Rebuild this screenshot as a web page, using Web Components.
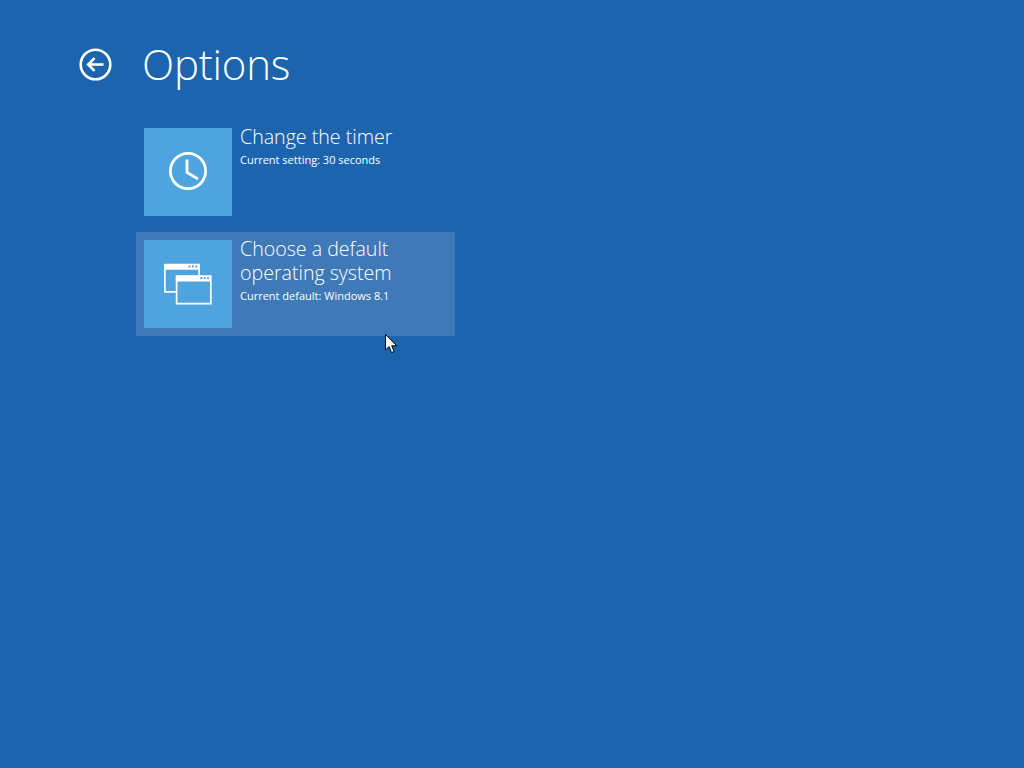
<!DOCTYPE html>
<html lang="en"><head><meta charset="utf-8"><title>Options</title>
<style>
html,body{margin:0;height:100%;background:#1c65ae;overflow:hidden}
body{font-family:"Open Sans","Liberation Sans",sans-serif;color:#fff}
</style></head>
<body>
<options-page>
  <page-header slot="header">Options</page-header>
  <option-tile icon="clock"><span slot="title">Change the timer</span><span slot="sub">Current setting: 30 seconds</span></option-tile>
  <option-tile icon="windows" hover><span slot="title" class="l">Choose a default</span><span slot="title" class="l">operating system</span><span slot="sub">Current default: Windows 8.1</span></option-tile>
</options-page>
<mouse-cursor></mouse-cursor>
<script>
class OptionsPage extends HTMLElement{constructor(){super();this.attachShadow({mode:'open'}).innerHTML=`<style>
:host{display:block;width:1024px;height:768px;box-sizing:border-box}
.head{padding:39px 0 0 79px;height:120px;box-sizing:border-box}
.list{display:flex;flex-direction:column;gap:8px;padding-left:136px;width:319px}
</style><div class="head"><slot name="header"></slot></div><div class="list"><slot></slot></div>`}}
class PageHeader extends HTMLElement{constructor(){super();this.attachShadow({mode:'open'}).innerHTML=`<style>
:host{display:flex;align-items:center;gap:30px;height:50px}
svg{width:33px;height:33px;display:block;flex:none}
.t{font:300 42px/50px "Open Sans","Liberation Sans",sans-serif;color:#fff;letter-spacing:-.2px}
</style><svg viewBox="0 0 33 33" fill="none" stroke="#fff" stroke-width="2.6"><circle cx="16.5" cy="16.5" r="14.8"/><path d="M24.5 16.5H9.5M15.5 10.2L9.2 16.5l6.3 6.3"/></svg><span class="t"><slot></slot></span>`}}
const icons={
clock:`<svg style="margin:-2px 0 0 0" width="40" height="40" viewBox="0 0 40 40" fill="none" stroke="#fff"><circle cx="20" cy="20" r="17.6" stroke-width="2.8"/><path d="M19 8.5V21.5L30 28" stroke-width="2.800"/></svg>`,
windows:`<svg style="margin:1px 0 0 1px" width="49" height="43" viewBox="0 0 50 44" fill="none" stroke="#fff" stroke-width="1.7"><path d="M.85 1.5h35v28H.85z"/><path d="M0 1h36v6H0z" fill="#fff" stroke="none"/><path d="M12.850 13.500h35v28h-35z" fill="#4ea4de"/><path d="M12 13h36v6H12z" fill="#fff" stroke="none"/><g fill="#4ea4de" stroke="none"><rect x="25" y="2.500" width="2" height="2"/><rect x="28.500" y="2.500" width="2" height="2"/><rect x="32" y="2.500" width="2" height="2"/><rect x="37" y="14.500" width="2" height="2"/><rect x="40.500" y="14.500" width="2" height="2"/><rect x="44" y="14.500" width="2" height="2"/></g></svg>`};
class OptionTile extends HTMLElement{constructor(){super();}
connectedCallback(){if(this.shadowRoot)return;this.attachShadow({mode:'open'}).innerHTML=`<style>
:host{display:flex;gap:8px;box-sizing:border-box;height:104px;padding:8px;color:#fff}
:host([hover]){background:#3f79b8}
.tile{width:88px;height:88px;background:#4ea4de;display:flex;align-items:center;justify-content:center;flex:none}
.txt{display:flex;flex-direction:column;margin-top:-3px}
.title{font:300 19.600px/24px "Open Sans","Liberation Sans",sans-serif;white-space:nowrap}
::slotted(.l){display:block;height:24px}
.sub{font:400 11px/15px "Open Sans","Liberation Sans",sans-serif;margin-top:3px;white-space:nowrap}
</style><div class="tile">${icons[this.getAttribute('icon')]}</div><div class="txt"><div class="title"><slot name="title"></slot></div><div class="sub"><slot name="sub"></slot></div></div>`}}
class MouseCursor extends HTMLElement{constructor(){super();this.attachShadow({mode:'open'}).innerHTML=`<style>
:host{position:absolute;left:385px;top:334px;display:block;width:14px;height:21px}
svg{display:block}</style><svg width="14" height="21" viewBox="0 0 14 21"><path d="M.5.5V16l3.600-3.400 2.400 6 2.600-1-2.400-5.800h5z" fill="#fff" stroke="#000" stroke-width="1"/></svg>`}}
customElements.define('options-page',OptionsPage);
customElements.define('page-header',PageHeader);
customElements.define('option-tile',OptionTile);
customElements.define('mouse-cursor',MouseCursor);
</script>
</body></html>
